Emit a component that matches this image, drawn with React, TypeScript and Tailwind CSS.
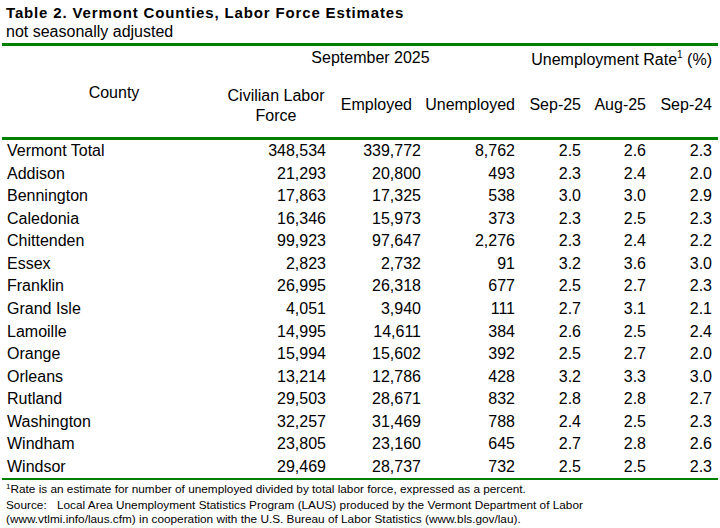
import React from 'react';

// Vermont county labor force table
type Row = [string, string, string, string, string, string, string];

const rows: Row[] = [
  ['Vermont Total', '348,534', '339,772', '8,762', '2.5', '2.6', '2.3'],
  ['Addison', '21,293', '20,800', '493', '2.3', '2.4', '2.0'],
  ['Bennington', '17,863', '17,325', '538', '3.0', '3.0', '2.9'],
  ['Caledonia', '16,346', '15,973', '373', '2.3', '2.5', '2.3'],
  ['Chittenden', '99,923', '97,647', '2,276', '2.3', '2.4', '2.2'],
  ['Essex', '2,823', '2,732', '91', '3.2', '3.6', '3.0'],
  ['Franklin', '26,995', '26,318', '677', '2.5', '2.7', '2.3'],
  ['Grand Isle', '4,051', '3,940', '111', '2.7', '3.1', '2.1'],
  ['Lamoille', '14,995', '14,611', '384', '2.6', '2.5', '2.4'],
  ['Orange', '15,994', '15,602', '392', '2.5', '2.7', '2.0'],
  ['Orleans', '13,214', '12,786', '428', '3.2', '3.3', '3.0'],
  ['Rutland', '29,503', '28,671', '832', '2.8', '2.8', '2.7'],
  ['Washington', '32,257', '31,469', '788', '2.4', '2.5', '2.3'],
  ['Windham', '23,805', '23,160', '645', '2.7', '2.8', '2.6'],
  ['Windsor', '29,469', '28,737', '732', '2.5', '2.5', '2.3'],
];

const cols = 'grid grid-cols-[224px_100px_95px_94px_66px_65px_66px]';

export default function App() {
  return (
    <div className="w-[720px] h-[528px] bg-white text-black overflow-hidden font-['Liberation_Sans',Arial,sans-serif]">
      <div className="ml-[2px] w-[716px]">
        {/* Titel */}
        <div className="pt-[3px] pl-[4px]">
          <div className="text-[15px] font-bold leading-[20px] tracking-[0.85px]">
            Table 2. Vermont Counties, Labor Force Estimates
          </div>
          <div className="text-[16px] leading-[18px]">not seasonally adjusted</div>
        </div>
        <div className="mt-[2px] h-[3px] bg-[#008000]" />

        {/* Kopfzeilen */}
        <div className={`${cols} grid-rows-[22px_69px] text-[16px] leading-[18px]`}>
          <div />
          <div className="col-span-3 pt-[3px] text-center">September 2025</div>
          <div className="col-span-3 pt-[5px] text-right whitespace-nowrap">
            Unemployment Rate<span className="relative top-[-7px] text-[10px]">1</span> (%)
          </div>
          <div className="pt-[16px] text-center">County</div>
          <div className="pt-[18px] text-center leading-[20px]">
            Civilian Labor
            <br />
            Force
          </div>
          <div className="pt-[28px] pr-[9px] text-right">Employed</div>
          <div className="pt-[28px] text-right whitespace-nowrap">Unemployed</div>
          <div className="pt-[28px] text-right">Sep-25</div>
          <div className="pt-[28px] text-right">Aug-25</div>
          <div className="pt-[28px] text-right">Sep-24</div>
        </div>
        <div className="h-[3px] bg-[#008000]" />

        {/* Datenzeilen */}
        <div className="text-[16px]">
          {rows.map((r) => (
            <div key={r[0]} className={`${cols} h-[22.57px] leading-[22.57px]`}>
              <div className="pl-[5px]">{r[0]}</div>
              {r.slice(1).map((v, i) => (
                <div key={i} className="text-right">
                  {v}
                </div>
              ))}
            </div>
          ))}
        </div>
        <div className="h-[2px] bg-[#008000]" />

        {/* Fussnoten */}
        <div className="pt-[2px] pl-[4px] text-[11.8px] leading-[14px]">
          <div>
            <span className="relative top-[-4px] text-[8px]">1</span>Rate is an estimate for number of unemployed divided by total labor force, expressed as a percent.
          </div>
          <div>
            <span className="inline-block w-[51px]">Source:</span>Local Area Unemployment Statistics Program (LAUS) produced by the Vermont Department of Labor
          </div>
          <div>
            (www.vtlmi.info/laus.cfm) in cooperation with the U.S. Bureau of Labor Statistics (www.bls.gov/lau).
          </div>
        </div>
      </div>
    </div>
  );
}
